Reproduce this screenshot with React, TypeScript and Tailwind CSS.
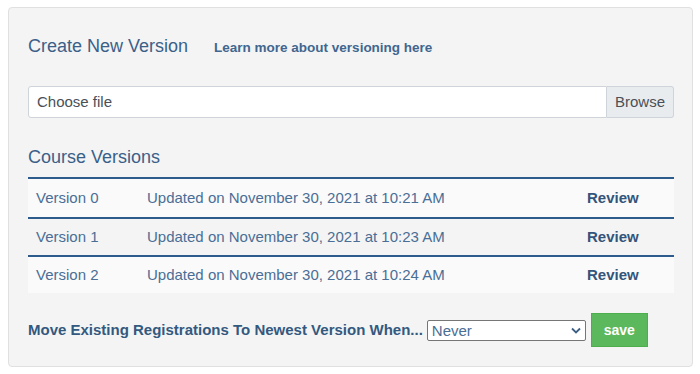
export default function App() {
    const versions = [
        { name: "Version 0", updated: "Updated on November 30, 2021 at 10:21 AM" },
        { name: "Version 1", updated: "Updated on November 30, 2021 at 10:23 AM" },
        { name: "Version 2", updated: "Updated on November 30, 2021 at 10:24 AM" },
    ];

    return (
        <div className="bg-white w-[700px] h-[374px] pt-[7px] pl-[8px] font-['Liberation_Sans',Arial,sans-serif]">
            <div className="w-[685px] h-[360px] bg-[#f4f4f4] border border-[#e0e0e0] rounded-[4px] pl-[19px] pt-[26px]">
                <div className="w-[646px]">
                    <div className="flex items-baseline gap-[26px] h-[24px]">
                        <h2 className="text-[18px] leading-[24px] text-[#3a6089]">Create New Version</h2>
                        <a className="text-[13.5px] font-bold text-[#41668f]">Learn more about versioning here</a>
                    </div>

                    <div className="flex mt-[28px] h-[32px]">
                        <div className="flex-1 bg-white border border-[#ced4da] rounded-l-[3px] flex items-center pl-[8px] text-[15px] text-[#495057]">
                            Choose file
                        </div>
                        <div className="w-[67px] bg-[#e9ecef] border border-l-0 border-[#ced4da] rounded-r-[3px] flex items-center justify-center text-[15px] text-[#495057]">
                            Browse
                        </div>
                    </div>

                    <h3 className="mt-[27px] text-[18px] leading-[24px] text-[#3a6089]">Course Versions</h3>

                    <div className="mt-[8px] border-t-2 border-[#2d5c8c]">
                        {versions.map((v, i) => (
                            <div
                                key={v.name}
                                className={`flex items-center h-[38px] text-[15px] text-[#4a6e96] ${i > 0 ? "border-t-2 border-[#2d5c8c]" : ""} ${i % 2 === 0 ? "bg-[#fafafa]" : "bg-[#f4f4f4]"}`}
                            >
                                <span className="w-[119px] pl-[8px]">{v.name}</span>
                                <span className="flex-1">{v.updated}</span>
                                <span className="w-[87px] font-bold text-[#34557a]">Review</span>
                            </div>
                        ))}
                    </div>

                    <div className="flex items-center mt-[20px] h-[34px]">
                        <span className="text-[15px] font-bold text-[#33597f]">Move Existing Registrations To Newest Version When...</span>
                        <div className="ml-[4px] w-[159px] h-[21px] bg-white border border-[#767676] rounded-[2px] flex items-center justify-between px-[4px]">
                            <span className="text-[15px] leading-none text-[#4a6e96]">Never</span>
                            <svg width="10" height="7" viewBox="0 0 10 7" fill="none">
                                <path d="M1 1.5L5 5.5L9 1.5" stroke="#3d5f85" strokeWidth="1.8" />
                            </svg>
                        </div>
                        <button className="ml-[5px] w-[57px] h-[34px] bg-[#5cb85c] border border-[#4cae4c] text-white text-[14px] font-bold">
                            save
                        </button>
                    </div>
                </div>
            </div>
        </div>
    );
}
